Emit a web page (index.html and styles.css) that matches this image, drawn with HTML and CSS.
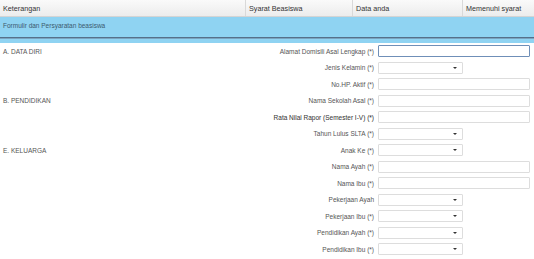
FILE: index.html
```html
<!DOCTYPE html>
<html lang="id">
<head>
<meta charset="UTF-8">
<title>Formulir Beasiswa</title>
<link rel="stylesheet" href="styles.css">
</head>
<body>
<div class="head">
  <div class="col c1">Keterangan</div>
  <div class="col c2">Syarat Beasiswa</div>
  <div class="col c3">Data anda</div>
  <div class="col c4">Memenuhi syarat</div>
</div>
<div class="band">
  <div class="band-title">Formulir dan Persyaratan beasiswa</div>
  <div class="band-line"></div>
</div>
<div class="form">
  <div class="row"><div class="sec">A. DATA DIRI</div><div class="lbl">Alamat Domisili Asal Lengkap (*)</div><div class="ctl"><span class="inp focus"></span></div></div>
  <div class="row"><div class="sec"></div><div class="lbl">Jenis Kelamin (*)</div><div class="ctl"><span class="sel"></span></div></div>
  <div class="row"><div class="sec"></div><div class="lbl">No.HP. Aktif (*)</div><div class="ctl"><span class="inp"></span></div></div>
  <div class="row"><div class="sec">B. PENDIDIKAN</div><div class="lbl">Nama Sekolah Asal (*)</div><div class="ctl"><span class="inp"></span></div></div>
  <div class="row"><div class="sec"></div><div class="lbl strong">Rata Nilai Rapor (Semester I-V) (*)</div><div class="ctl"><span class="inp"></span></div></div>
  <div class="row"><div class="sec"></div><div class="lbl">Tahun Lulus SLTA (*)</div><div class="ctl"><span class="sel"></span></div></div>
  <div class="row"><div class="sec">E. KELUARGA</div><div class="lbl">Anak Ke (*)</div><div class="ctl"><span class="sel"></span></div></div>
  <div class="row"><div class="sec"></div><div class="lbl">Nama Ayah (*)</div><div class="ctl"><span class="inp"></span></div></div>
  <div class="row"><div class="sec"></div><div class="lbl">Nama Ibu (*)</div><div class="ctl"><span class="inp"></span></div></div>
  <div class="row"><div class="sec"></div><div class="lbl">Pekerjaan Ayah</div><div class="ctl"><span class="sel"></span></div></div>
  <div class="row"><div class="sec"></div><div class="lbl">Pekerjaan Ibu (*)</div><div class="ctl"><span class="sel"></span></div></div>
  <div class="row"><div class="sec"></div><div class="lbl">Pendidikan Ayah (*)</div><div class="ctl"><span class="sel"></span></div></div>
  <div class="row"><div class="sec"></div><div class="lbl">Pendidikan Ibu (*)</div><div class="ctl"><span class="sel"></span></div></div>
</div>
</body>
</html>
```
FILE: styles.css
```css
body {
  margin: 0;
  font-family: "Liberation Sans", Arial, sans-serif;
  font-size: 6.5px;
  color: #555;
  background: #fff;
}
.head {
  display: flex;
  height: 16px;
  background: linear-gradient(#fafafa, #ececec);
  border-bottom: 1px solid #d4d4d4;
}
.col {
  padding: 4px 3px 0;
  box-sizing: border-box;
  border-right: 1px solid #d9d9d9;
  color: #333;
  font-size: 7.2px;
}
.c1 { width: 246px; }
.c2 { width: 107px; }
.c3 { width: 110px; }
.c4 { flex: 1; border-right: none; }
.band {
  background: #8fd3f2;
  height: 26px;
  padding-top: 5px;
  box-sizing: border-box;
}
.band-title {
  padding-left: 3px;
  color: #3c5a6e;
  height: 15px;
}
.band-line {
  height: 1px;
  background: #55708a;
  border-bottom: 1px solid #7aa3c0;
}
.row {
  display: flex;
  align-items: center;
  height: 16.5px;
}
.sec {
  width: 120px;
  padding-left: 3px;
}
.lbl {
  flex: 1;
  text-align: right;
  padding-right: 4px;
}
.lbl.strong {
  color: #3a3a3a;
  -webkit-text-stroke: 0.05px #3a3a3a;
}
.ctl {
  width: 156px;
  display: flex;
}
.inp, .sel {
  display: block;
  height: 12px;
  box-sizing: border-box;
  border: 1px solid #ddd;
  background: #fff;
  border-radius: 1px;
}
.inp { width: 152px; }
.inp.focus { border-color: #6f8fb8; }
.sel {
  width: 85px;
  position: relative;
}
.sel::after {
  content: "";
  position: absolute;
  right: 5px;
  top: 4px;
  border-left: 2px solid transparent;
  border-right: 2px solid transparent;
  border-top: 2px solid #333;
}
```
